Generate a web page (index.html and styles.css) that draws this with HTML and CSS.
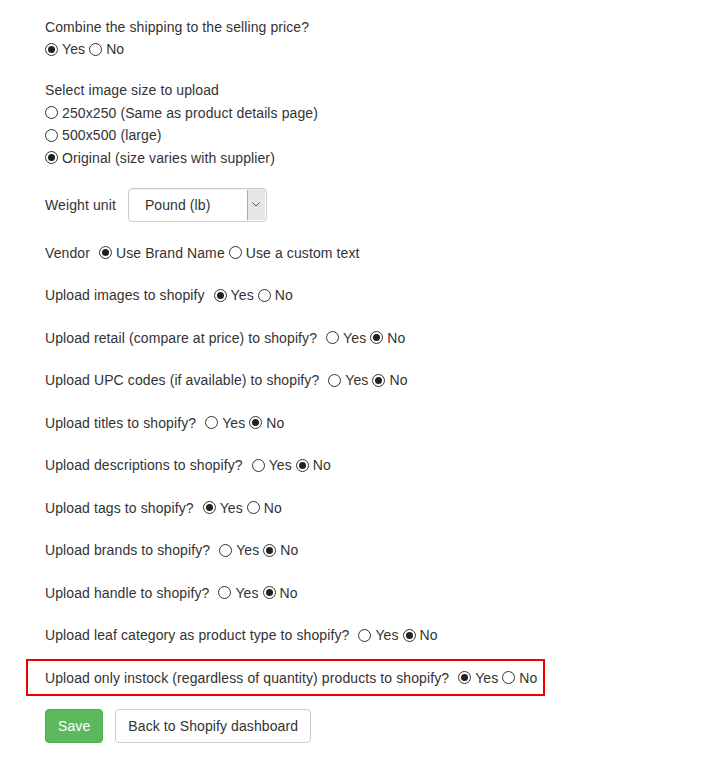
FILE: index.html
```html
<!DOCTYPE html>
<html lang="en">
<head>
  <meta charset="UTF-8">
  <meta name="viewport" content="width=device-width, initial-scale=1.0">
  <title>Shopify Upload Settings</title>
  <link rel="stylesheet" href="styles.css">
</head>
<body>
  <form class="settings">
    <div class="group">
      <div class="label">Combine the shipping to the selling price?</div>
      <div class="options">
        <label class="radio"><input type="radio" name="combine" checked> Yes</label>
        <label class="radio"><input type="radio" name="combine"> No</label>
      </div>
    </div>

    <div class="group">
      <div class="label">Select image size to upload</div>
      <label class="radio stacked"><input type="radio" name="size"> 250x250 (Same as product details page)</label>
      <label class="radio stacked"><input type="radio" name="size"> 500x500 (large)</label>
      <label class="radio stacked"><input type="radio" name="size" checked> Original (size varies with supplier)</label>
    </div>

    <div class="select-row">
      <span class="label">Weight unit</span>
      <div class="select">
        <span class="select-value">Pound (lb)</span>
        <span class="select-arrow">
          <svg width="8" height="5" viewBox="0 0 8 5"><path d="M0.5 0.5 L4 4 L7.5 0.5" fill="none" stroke="#555" stroke-width="1"/></svg>
        </span>
      </div>
    </div>

    <div class="row">
      <span class="label">Vendor</span>
      <label class="radio"><input type="radio" name="vendor" checked> Use Brand Name</label>
      <label class="radio"><input type="radio" name="vendor"> Use a custom text</label>
    </div>

    <div class="row">
      <span class="label">Upload images to shopify</span>
      <label class="radio"><input type="radio" name="images" checked> Yes</label>
      <label class="radio"><input type="radio" name="images"> No</label>
    </div>

    <div class="row">
      <span class="label">Upload retail (compare at price) to shopify?</span>
      <label class="radio"><input type="radio" name="retail"> Yes</label>
      <label class="radio"><input type="radio" name="retail" checked> No</label>
    </div>

    <div class="row">
      <span class="label">Upload UPC codes (if available) to shopify?</span>
      <label class="radio"><input type="radio" name="upc"> Yes</label>
      <label class="radio"><input type="radio" name="upc" checked> No</label>
    </div>

    <div class="row">
      <span class="label">Upload titles to shopify?</span>
      <label class="radio"><input type="radio" name="titles"> Yes</label>
      <label class="radio"><input type="radio" name="titles" checked> No</label>
    </div>

    <div class="row">
      <span class="label">Upload descriptions to shopify?</span>
      <label class="radio"><input type="radio" name="desc"> Yes</label>
      <label class="radio"><input type="radio" name="desc" checked> No</label>
    </div>

    <div class="row">
      <span class="label">Upload tags to shopify?</span>
      <label class="radio"><input type="radio" name="tags" checked> Yes</label>
      <label class="radio"><input type="radio" name="tags"> No</label>
    </div>

    <div class="row">
      <span class="label">Upload brands to shopify?</span>
      <label class="radio"><input type="radio" name="brands"> Yes</label>
      <label class="radio"><input type="radio" name="brands" checked> No</label>
    </div>

    <div class="row">
      <span class="label">Upload handle to shopify?</span>
      <label class="radio"><input type="radio" name="handle"> Yes</label>
      <label class="radio"><input type="radio" name="handle" checked> No</label>
    </div>

    <div class="row">
      <span class="label">Upload leaf category as product type to shopify?</span>
      <label class="radio"><input type="radio" name="leaf"> Yes</label>
      <label class="radio"><input type="radio" name="leaf" checked> No</label>
    </div>

    <div class="row highlight">
      <span class="label">Upload only instock (regardless of quantity) products to shopify?</span>
      <label class="radio"><input type="radio" name="instock" checked> Yes</label>
      <label class="radio"><input type="radio" name="instock"> No</label>
    </div>

    <div class="actions">
      <button type="button" class="btn btn-success">Save</button>
      <button type="button" class="btn btn-default">Back to Shopify dashboard</button>
    </div>
  </form>
</body>
</html>
```

FILE: styles.css
```css
body {
  font-family: "Liberation Sans", Arial, Helvetica, sans-serif;
  font-size: 14px;
  line-height: 20px;
  letter-spacing: 0.1px;
  color: #333;
  background-color: #fff;
  margin: 0;
  padding: 0;
}

.settings {
  padding: 17px 0 20px 45px;
}

.group {
  margin-bottom: 21px;
}

.options {
  margin-top: 2px;
  display: flex;
  gap: 4px;
}

.radio {
  display: inline-flex;
  align-items: center;
  gap: 4px;
}

.radio.stacked {
  display: flex;
  margin-top: 2.5px;
}

.radio input {
  appearance: none;
  -webkit-appearance: none;
  margin: 0;
  width: 13px;
  height: 13px;
  border: 1px solid #333;
  border-radius: 50%;
  background: #fff;
  position: relative;
  flex-shrink: 0;
}

.radio input:checked::after {
  content: "";
  position: absolute;
  left: 2px;
  top: 2px;
  width: 7px;
  height: 7px;
  border-radius: 50%;
  background: #222;
}

.select-row {
  display: flex;
  align-items: center;
  gap: 12px;
  margin-top: -1px;
  margin-bottom: 21px;
}

.select {
  display: flex;
  align-items: stretch;
  width: 139px;
  height: 34px;
  box-sizing: border-box;
  border: 1px solid #ccc;
  border-radius: 4px;
  box-shadow: inset 0 1px 1px rgba(0, 0, 0, 0.075);
  padding: 1px 1px 1px 0;
}

.select-value {
  flex: 1;
  padding-left: 16px;
  line-height: 30px;
}

.select-arrow {
  width: 17px;
  background: #e6e6e6;
  border-left: 1px solid #aaa;
  display: flex;
  align-items: center;
  justify-content: center;
}

.row {
  display: flex;
  align-items: center;
  gap: 4px;
  height: 20px;
  margin-bottom: 22.5px;
}

.row .label {
  margin-right: 5px;
}

.highlight {
  display: inline-flex;
  border: 2px solid #e00;
  padding: 7px 6px 6px 17px;
  margin-left: -19px;
  margin-top: -9px;
  margin-bottom: 13px;
}

.actions {
  display: flex;
  gap: 12px;
}

.btn {
  font-family: inherit;
  font-size: 14px;
  line-height: 20px;
  letter-spacing: 0.1px;
  padding: 6px 12px;
  border: 1px solid transparent;
  border-radius: 4px;
  cursor: pointer;
}

.btn-success {
  background-color: #5cb85c;
  border-color: #4cae4c;
  color: #fff;
}

.btn-default {
  background-color: #fff;
  border-color: #ccc;
  color: #333;
}
```
